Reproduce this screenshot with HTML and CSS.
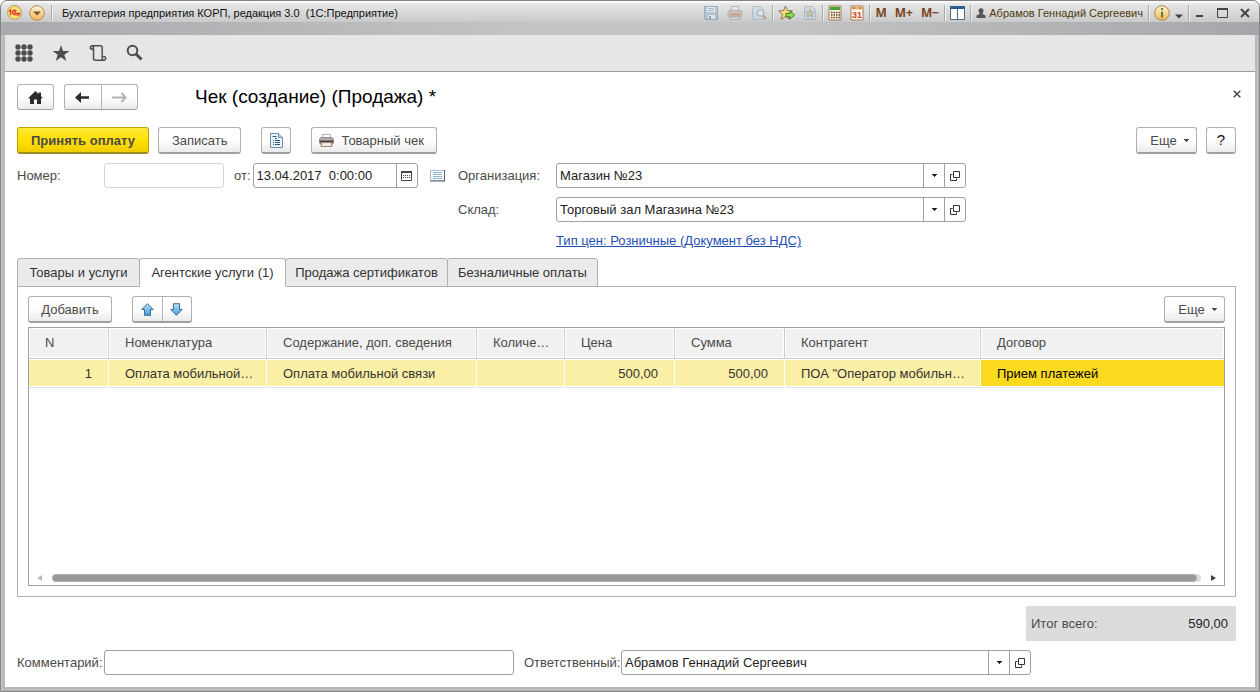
FILE: index.html
```html
<!DOCTYPE html>
<html lang="ru">
<head>
<meta charset="utf-8">
<title>Чек (создание) (Продажа)</title>
<link rel="stylesheet" href="styles.css">
</head>
<body>
<svg class="defs" aria-hidden="true">
  <symbol id="caret" viewBox="0 0 5 3"><path d="M0 0h5v1H4v1H3v1H2V2H1V1H0z" fill="currentColor"/></symbol>
  <symbol id="open" viewBox="0 0 10 10"><path d="M3.500.5h6v6h-6z M2.500 3.500h-2v6h6v-2" fill="none" stroke="currentColor"/></symbol>
</svg>
<div class="window">
  <header class="titlebar">
    <button class="tb" aria-label="1С"><svg width="15" height="15" viewBox="0 0 14 14"><defs><radialGradient id="g1"><stop offset="0" stop-color="#fff6a8"/><stop offset=".7" stop-color="#fbe36c"/><stop offset="1" stop-color="#d9b56a"/></radialGradient></defs><circle cx="7" cy="7" r="6.700" fill="url(#g1)" stroke="#b39a78" stroke-width=".6"/><path d="M1.800 6l1.700-1.300V9.500M8.800 5.300C7.800 4.200 5.200 4.600 5.200 7s2.200 2.400 7 2.300M8.500 6.600C7.700 6 6.800 6.300 6.900 7.100c0 .8 1 .7 5.300.7" fill="none" stroke="#d8231c" stroke-width="1.100"/></svg></button>
    <button class="tb menu-btn" aria-label="Меню"><svg width="16" height="16" viewBox="0 0 16 16"><defs><linearGradient id="g2" x2="0" y2="1"><stop stop-color="#fdf3df"/><stop offset=".5" stop-color="#f8d596"/><stop offset="1" stop-color="#f5b255"/></linearGradient></defs><circle cx="8" cy="8" r="7.300" fill="url(#g2)" stroke="#b58a55"/><path d="M4 6.500h8L8 10.500z" fill="#7d563a"/></svg></button>
    <span class="sep"></span>
    <span class="app-title">Бухгалтерия предприятия КОРП, редакция 3.0&nbsp; (1С:Предприятие)</span>
    <div class="tools">
      <button class="tb faded" aria-label="Сохранить"><svg width="16" height="16" viewBox="0 0 16 16"><path d="M1.500 1.500h13v13h-12l-1-1z" fill="#8fb1ce" stroke="#5681a6"/><path d="M4 2h8v5H4zM5 10h7v4H5z" fill="#eef3f7"/><path d="M5 3.500h6M5 5.500h6" stroke="#7795ad"/><path d="M6 11h2v3H6z" fill="#5681a6"/></svg></button>
      <button class="tb faded" aria-label="Печать"><svg width="16" height="16" viewBox="0 0 16 16"><path d="M4.500 1.500h7v5h-7zM3 10.500h10v4H3z" fill="#f5ece4" stroke="#8d8c93"/><rect x="1" y="5.500" width="14" height="6.500" rx="2" fill="#b4adb0" stroke="#8a858c"/><path d="M3 9.500h10" stroke="#c9632a" stroke-width="2"/><path d="M4 12.500h8" stroke="#aaa"/></svg></button>
      <button class="tb faded" aria-label="Просмотр"><svg width="16" height="16" viewBox="0 0 16 16"><path d="M1.500 1.500h8l3 3v10h-11z" fill="#c6d9e8" stroke="#86a4bc"/><circle cx="9.500" cy="8" r="3.300" fill="#e5f0f8" stroke="#67809a"/><path d="M12 10.500l3 3.500" stroke="#b36f3d" stroke-width="2.200"/></svg></button>
      <span class="sep"></span>
      <button class="tb" aria-label="В избранное"><svg width="17" height="16" viewBox="0 0 17 16"><path d="M7.500 1l2 4.500 5 .5-4 3.300 1.300 5-4.300-2.600-4.500 2.600 1.300-5L.700 6l4.800-.5z" fill="#fbd27b" stroke="#8a7a66"/><path d="M8 8.500h4V6l4.500 4.200L12 14v-2.300H8z" fill="#91df4b" stroke="#348524"/></svg></button>
      <button class="tb faded" aria-label="Избранное"><svg width="14" height="16" viewBox="0 0 14 16"><path d="M1.500 1.500h8l3 3v10h-11z" fill="#c3d3df" stroke="#839fb3"/><path d="M7 4l1.200 2.800 3 .2-2.300 2 .8 3L7 10.400 4.300 12l.8-3-2.300-2 3-.2z" fill="#c9a67c" stroke="#776f68" stroke-width=".8"/></svg></button>
      <span class="sep"></span>
      <button class="tb" aria-label="Калькулятор"><svg width="14" height="16" viewBox="0 0 14 16"><path d="M1 1h12v14H1z" fill="#fff0d8" stroke="#a17b57"/><path d="M2 2h10v3H2z" fill="#43a535"/><path d="M3 7.500h9M3 10h9M3 12.500h9" stroke="#5b4638" stroke-width="1.400" stroke-dasharray="1.500 1"/></svg></button>
      <button class="tb cal" aria-label="Календарь"><svg width="14" height="16" viewBox="0 0 14 16"><path d="M1 1h12v14H1z" fill="#fff8ec" stroke="#a17b57"/><path d="M1.500 1.500h11v3h-11z" fill="#efb375"/><path d="M3 3h2M9 3h2" stroke="#87583a"/><text x="7" y="13" text-anchor="middle" class="cal-num">31</text></svg></button>
      <span class="sep"></span>
      <button class="tb mem">M</button>
      <button class="tb mem">M+</button>
      <button class="tb mem">M−</button>
      <span class="sep"></span>
      <button class="tb" aria-label="Панели"><svg width="15" height="14" viewBox="0 0 15 14"><path d="M.5.5h14v13H.5z" fill="#fff" stroke="#486b8c"/><path d="M0 0h15v3H0z" fill="#2b5e93"/><path d="M7.500 3v10" stroke="#486b8c"/></svg></button>
      <span class="sep"></span>
      <button class="tb user"><svg width="10" height="10" viewBox="0 0 10 10"><circle cx="5" cy="2.800" r="2.500" fill="#555"/><path d="M.5 10V7.500L3.500 6V4h3v2l3 1.500V10z" fill="#555"/></svg>Абрамов Геннадий Сергеевич</button>
      <span class="sep"></span>
      <div class="info">
        <button class="tb" aria-label="Информация"><svg width="16" height="16" viewBox="0 0 16 16"><circle cx="8" cy="8" r="7.300" fill="url(#g2)" stroke="#ae8450"/><path d="M8 3v2M8 6.500v6" stroke="#4b8a24" stroke-width="2"/></svg></button>
        <button class="tb drop" aria-label="Ещё"><svg width="8" height="5" viewBox="0 0 8 5"><path d="M0 .5h8L4 4.500z" fill="#444"/></svg></button>
      </div>
      <span class="sep"></span>
      <div class="win-ctl">
        <button class="tb" aria-label="Свернуть"><svg width="11" height="10" viewBox="0 0 11 10"><path d="M2 8h7" stroke="#444" stroke-width="2"/></svg></button>
        <button class="tb" aria-label="Развернуть"><svg width="11" height="10" viewBox="0 0 11 10"><path d="M.5 1h10v8.500H.5z" fill="none" stroke="#444"/><path d="M0 1h11" stroke="#444" stroke-width="2"/></svg></button>
        <button class="tb" aria-label="Закрыть"><svg width="10" height="10" viewBox="0 0 10 10"><path d="M1 1l8 8M9 1L1 9" stroke="#444" stroke-width="2"/></svg></button>
      </div>
    </div>
  </header>
  <main class="client">
    <nav class="mainbar">
      <button class="tb" aria-label="Разделы"><svg width="18" height="18" viewBox="0 0 18 18" fill="#4d4d4d"><circle cx="3" cy="3" r="2.700"/><circle cx="9" cy="3" r="2.700"/><circle cx="15" cy="3" r="2.700"/><circle cx="3" cy="9" r="2.700"/><circle cx="9" cy="9" r="2.700"/><circle cx="15" cy="9" r="2.700"/><circle cx="3" cy="15" r="2.700"/><circle cx="9" cy="15" r="2.700"/><circle cx="15" cy="15" r="2.700"/></svg></button>
      <button class="tb" aria-label="Избранное"><svg width="18" height="18" viewBox="0 0 18 18"><path d="M9 1l2 6h6.500l-5.200 3.800 2 6.200L9 13.200 3.700 17l2-6.200L.500 7H7z" fill="#4d4d4d"/></svg></button>
      <button class="tb" aria-label="История"><svg width="18" height="18" viewBox="0 0 18 18" fill="none" stroke="#4d4d4d" stroke-width="1.500"><path d="M4.500 5.500V4.200C4.500 1.200 1.300 1.300 1.300 3.500c0 1.300 1.200 1.900 3.200 1.900M3 1.700h8.500c1.200 0 1.700.8 1.700 2v7.800M4.500 5v9.300c0 1.300.8 2 2 2h8.500M13.200 14c0 3 3.500 2.800 3.500.3 0-1.500-1.500-2-3.500-1.800z"/></svg></button>
      <button class="tb" aria-label="Поиск"><svg width="18" height="18" viewBox="0 0 18 18" fill="none" stroke="#4d4d4d"><circle cx="6.500" cy="6.500" r="4.800" stroke-width="2"/><path d="M10 10l5.500 5.500" stroke-width="3"/></svg></button>
    </nav>

    <div class="nav">
      <button class="btn home" aria-label="Домой"><svg width="15" height="13" viewBox="0 0 15 13"><path d="M7.500 0l3 2.900V1.500H13v3.800L15 7.300h-2V13H9V8.500H6V13H2V7.300H0z" fill="#2b2b2b"/></svg></button>
      <div class="pair nav-pair">
        <button aria-label="Назад"><svg width="15" height="11" viewBox="0 0 15 11"><path d="M6 0v4.300h8v2.400H6V11L0 5.500z" fill="#2b2b2b"/></svg></button>
        <button aria-label="Вперёд"><svg width="15" height="11" viewBox="0 0 15 11"><path d="M9.500 1l4 4.500-4 4.500M13 5.500H0" fill="none" stroke="#b4b4b4" stroke-width="2"/></svg></button>
      </div>
      <h1>Чек (создание) (Продажа) *</h1>
      <button class="tb close" aria-label="Закрыть форму"><svg width="8" height="8" viewBox="0 0 8 8"><path d="M.7.700l6.600 6.600M7.300.700L.700 7.300" stroke="#444" stroke-width="1.400"/></svg></button>
    </div>

    <form class="form">
      <div class="commands">
        <button type="button" class="btn primary">Принять оплату</button>
        <button type="button" class="btn">Записать</button>
        <button type="button" class="btn square" aria-label="Проводки"><svg width="13" height="15" viewBox="0 0 13 15"><path d="M.5.5h8l4 4v10H.5z" fill="#e9f3fa" stroke="#6e8fa9"/><path d="M8.500.5v4h4" fill="#bcd3e4" stroke="#6e8fa9"/><path d="M2.500 3.500h4M5 5.500h2M3 7.500h1M5 7.500h5M3 9.500h1M5 9.500h5M3 11.500h1M5 11.500h5" stroke="#315a79"/></svg></button>
        <button type="button" class="btn print"><svg width="15" height="13" viewBox="0 0 15 13"><path d="M3.500.5h8l.5 4H3z" fill="#fff" stroke="#b5afaf"/><rect x=".5" y="3.500" width="14" height="7" rx="2.500" fill="#b5b1b2" stroke="#8b8787"/><path d="M1 7.500h13" stroke="#4a403e" stroke-width="2"/><path d="M3 8.500h9l1 4H2z" fill="#f6e6dc" stroke="#a08678"/><path d="M11 6h2" stroke="#d8652f"/></svg>Товарный чек</button>
        <button type="button" class="btn more push">Еще <svg width="5" height="3"><use href="#caret"/></svg></button>
        <button type="button" class="btn square help">?</button>
      </div>

      <div class="fields">
        <div class="doc">
          <label class="num-label" for="num">Номер:</label>
          <div class="field num pale"><input id="num" type="text"></div>
          <label for="date">от:</label>
          <div class="field date"><input id="date" type="text" value="13.04.2017  0:00:00"><button type="button" aria-label="Выбрать дату"><svg width="11" height="10" viewBox="0 0 11 10"><path d="M.5 1h10v8.500H.5z" fill="none" stroke="#444"/><path d="M0 1h11" stroke="#444" stroke-width="2"/><path d="M2 4.500h8M2 6.500h8" stroke="#444" stroke-dasharray="1 1"/></svg></button></div>
          <svg class="list-icon" width="15" height="12" viewBox="0 0 15 12"><path d="M.5.5h14v10H.5z" fill="#fff" stroke="#a5bdd0"/><path d="M14.500 0v11M0 11h15" stroke="#4d6470"/><path d="M3 2.500h9M3 4.500h9M3 6.500h9M3 8.500h9" stroke="#8db0cc"/></svg>
        </div>
        <div class="org">
          <label for="org">Организация:</label>
          <div class="field"><div class="combo"><select id="org"><option>Магазин №23</option></select><span class="arrow"><svg width="5" height="3"><use href="#caret"/></svg></span></div><button type="button" aria-label="Открыть организацию"><svg width="10" height="10"><use href="#open"/></svg></button></div>
          <label for="store">Склад:</label>
          <div class="field"><div class="combo"><select id="store"><option>Торговый зал Магазина №23</option></select><span class="arrow"><svg width="5" height="3"><use href="#caret"/></svg></span></div><button type="button" aria-label="Открыть склад"><svg width="10" height="10"><use href="#open"/></svg></button></div>
          <a class="price" href="#price">Тип цен: Розничные (Документ без НДС)</a>
        </div>
      </div>

      <div class="tabs" role="tablist">
        <button type="button" role="tab">Товары и услуги</button>
        <button type="button" role="tab" aria-selected="true" class="active">Агентские услуги (1)</button>
        <button type="button" role="tab">Продажа сертификатов</button>
        <button type="button" role="tab">Безналичные оплаты</button>
      </div>
      <section class="panel">
        <div class="panel-bar">
          <button type="button" class="btn add">Добавить</button>
          <div class="pair move-pair">
            <button type="button" aria-label="Вверх"><svg width="13" height="13" viewBox="0 0 13 13"><defs><linearGradient id="g3" x2="0" y2="1"><stop stop-color="#b9e0f7"/><stop offset="1" stop-color="#3f9ede"/></linearGradient></defs><path d="M6.500.7l5.700 5.800H9.500v5.800h-6V6.500H.800z" fill="url(#g3)" stroke="#3a6c93"/></svg></button>
            <button type="button" aria-label="Вниз"><svg width="13" height="13" viewBox="0 0 13 13"><path d="M6.500 12.300L.8 6.500h2.700V.7h6v5.800h2.700z" fill="url(#g3)" stroke="#3a6c93"/></svg></button>
          </div>
          <button type="button" class="btn more push">Еще <svg width="5" height="3"><use href="#caret"/></svg></button>
        </div>
        <div class="grid">
          <table>
            <colgroup><col class="c-n"><col class="c-nom"><col class="c-desc"><col class="c-qty"><col class="c-sum"><col class="c-sum"><col class="c-agent"><col></colgroup>
            <thead><tr><th>N</th><th>Номенклатура</th><th>Содержание, доп. сведения</th><th>Количе…</th><th>Цена</th><th>Сумма</th><th>Контрагент</th><th>Договор</th></tr></thead>
            <tbody><tr><td class="r">1</td><td>Оплата мобильной…</td><td>Оплата мобильной связи</td><td></td><td class="r">500,00</td><td class="r">500,00</td><td>ПОА "Оператор мобильн…</td><td class="current">Прием платежей</td></tr></tbody>
          </table>
          <div class="scroll">
            <svg width="5" height="6" viewBox="0 0 5 6"><path d="M5 0v6L0 3z" fill="#bbb"/></svg>
            <div class="track"><div class="thumb"></div></div>
            <svg width="5" height="6" viewBox="0 0 5 6"><path d="M0 0v6l5-3z" fill="#444"/></svg>
          </div>
        </div>
      </section>

      <div class="total"><span>Итог всего:</span><output>590,00</output></div>

      <div class="footer">
        <label for="comment">Комментарий:</label>
        <div class="field comment"><input id="comment" type="text"></div>
        <label class="resp-label" for="resp">Ответственный:</label>
        <div class="field"><div class="combo"><select id="resp"><option>Абрамов Геннадий Сергеевич</option></select><span class="arrow"><svg width="5" height="3"><use href="#caret"/></svg></span></div><button type="button" aria-label="Открыть ответственного"><svg width="10" height="10"><use href="#open"/></svg></button></div>
      </div>
    </form>
  </main>
</div>
</body>
</html>
```
FILE: styles.css
```css
* { box-sizing: border-box; }
body { margin: 0; background: #fff; color: #4a4a4a; font: 13px/16px "Liberation Sans", Arial, sans-serif; }
button, input, select { font: inherit; color: inherit; margin: 0; }
button { padding: 0; border: 0; background: none; white-space: nowrap; }
svg { display: block; flex: none; }
.defs { position: absolute; width: 0; height: 0; }

.window { min-height: 100vh; display: flex; flex-direction: column; padding: 0 4px 4px; border: 1px solid #858283; border-radius: 7px 7px 0 0; background: #b8b9ba; box-shadow: inset 1px 0 #c9c9c9; }
.titlebar { height: 34px; margin: 0 -4px; padding: 0 9px 11px 6px; display: flex; align-items: center; border-radius: 6px 6px 0 0; background: linear-gradient(#fff 0, #e6e6e6 3px, #c9cacb 21px, transparent 21px), linear-gradient(90deg, #a9aaad, #c4c5c6 45%, #c4c5c6 60%, #a6a7aa); }
.tb { display: flex; align-items: center; justify-content: center; }
.titlebar .sep { width: 1px; height: 16px; background: #aaa; box-shadow: 1px 0 #eee; }
.menu-btn { margin: 0 6px 0 7px; }
.app-title { margin-left: 10px; padding-top: 1px; color: #111; font-size: 11px; }
.tools { margin-left: auto; display: flex; align-items: center; gap: 8px; padding-top: 1px; color: #4d3b0c; font-size: 11px; }
.tools .sep { margin: 0 -3px; }
.faded { opacity: .5; }
.cal-num { font: bold 9px "Liberation Sans", Arial, sans-serif; fill: #d9412b; }
.mem { color: #7b4322; font: bold 12px/16px "Noto Sans", sans-serif; }
.user { gap: 3px; }
.info { display: flex; gap: 5px; }
.drop { padding-top: 6px; }
.win-ctl { display: flex; gap: 12px; }

.client { flex: 1; display: flex; flex-direction: column; background: #fff; }
.mainbar { height: 37px; display: flex; align-items: center; gap: 19px; padding-left: 10px; background: #e6e6e6; border-bottom: 1px solid #9d9d9d; }

.btn, .pair { border: 1px solid #b0b0b0; border-bottom: 2px solid #a0a0a0; border-radius: 3px; background: linear-gradient(#fff 50%, #ebebeb); }
.btn { height: 27px; padding: 1px 13px 0; display: flex; align-items: center; justify-content: center; }
.nav { display: flex; align-items: center; padding: 12px 14px 0 12px; }
.nav .btn, .nav .pair { border-width: 1px; }
.home { width: 37px; height: 26px; padding: 0; }
.pair { display: flex; }
.pair button { flex: 1; display: flex; align-items: center; justify-content: center; }
.pair button + button { border-left: 1px solid #b5b5b5; }
.nav-pair { width: 74px; height: 26px; margin-left: 10px; }
.nav h1 { margin: 0 0 0 57px; color: #000; font: 19px/24px "Liberation Sans", Arial, sans-serif; }
.close { margin-left: auto; padding-bottom: 6px; }

.form { flex: 1; display: flex; flex-direction: column; padding: 17px 19px 12px 12px; }
.commands { display: flex; }
.primary { margin-right: 9px; border-color: #c0a300; border-bottom-color: #a08c20; background: linear-gradient(#ffea3c, #ffe000 50%, #f1ce00); font-weight: bold; }
.square { width: 30px; padding: 0; margin-left: 20px; }
.print { margin-left: 20px; padding: 1px 12px 0 7px; gap: 7px; }
.push { margin-left: auto; }
.more { width: 61px; gap: 7px; padding: 1px 0 0 6px; }
.help { margin-left: 9px; color: #111; font-size: 15px; }

.fields { display: flex; align-items: flex-start; padding-top: 9px; }
.doc { display: flex; align-items: center; width: 441px; }
.num-label { width: 87px; }
.num { width: 120px; margin-right: 10px; }
.date { width: 165px; margin-left: 2px; }
.list-icon { margin-left: 12px; }
.field { height: 25px; display: flex; border: 1px solid #a0a0a0; border-radius: 3px; background: #fff; color: #222; }
.field.pale { border-color: #d6d6d6; }
.field input { flex: 1; width: 0; padding: 0 3px; border: 0; background: none; outline: 0; white-space: pre; }
.field > button { width: 21px; display: flex; align-items: center; justify-content: center; border-left: 1px solid #a0a0a0; color: #333; }
.combo { flex: 1; display: grid; }
.combo select, .arrow { grid-area: 1 / 1; }
.combo select { appearance: none; padding: 0 24px 0 3px; border: 0; background: none; }
.arrow { justify-self: end; width: 21px; display: flex; align-items: center; justify-content: center; border-left: 1px solid #a0a0a0; pointer-events: none; }
.org { display: grid; grid-template-columns: 98px 410px; row-gap: 9px; align-items: center; }
.price { grid-column: 2; justify-self: start; padding-top: 2px; color: #1f4fb5; }

.tabs { display: grid; grid-template-columns: 123px 146px 162px 150px; padding-top: 9px; }
.tabs button { height: 29px; border: 1px solid #b0b0b0; border-radius: 3px 3px 0 0; background: #ebebeb; color: #333; }
.tabs button + button { margin-left: -1px; }
.tabs .active { position: relative; background: #fff; border-bottom-color: #fff; }
.panel { flex: 1; display: flex; flex-direction: column; margin-top: -1px; padding: 9px 10px 10px; border: 1px solid #b0b0b0; }
.panel-bar { display: flex; }
.add { width: 84px; }
.move-pair { width: 60px; height: 27px; margin-left: 20px; }
.grid { flex: 1; display: flex; flex-direction: column; margin-top: 4px; border: 1px solid #a0a0a0; }
table { width: 100%; table-layout: fixed; border-collapse: separate; border-spacing: 0; }
.c-n { width: 80px; }
.c-nom { width: 158px; }
.c-desc { width: 210px; }
.c-qty { width: 88px; }
.c-sum { width: 110px; }
.c-agent { width: 196px; }
th, td { padding: 0 8px 0 16px; overflow: hidden; white-space: nowrap; text-overflow: ellipsis; text-align: left; font-weight: normal; }
th { height: 31px; background: #f1f1f1; border-right: 1px solid #ccc; border-bottom: 1px solid #ccc; box-shadow: inset 0 0 0 1px #fff; }
td { height: 29px; background: #fcf0a6; color: #333; border-top: 1px solid #fff; border-bottom: 1px solid #e3e3e3; border-right: 1px solid #fff; box-shadow: inset 0 -1px #fff; }
th:last-child, td:last-child { border-right: 0; }
td.r { text-align: right; padding-right: 16px; }
td.current { background: #fbda20; color: #000; }
.scroll { margin-top: auto; display: flex; align-items: center; gap: 10px; padding: 0 8px 3px; }
.track { flex: 1; height: 8px; border-radius: 4px; background: #dcdcdc; padding: 0 4px 0 0; }
.thumb { height: 8px; border: 1px solid #b0b0b0; border-radius: 4px; background: #999; }

.total { align-self: flex-end; width: 210px; height: 35px; margin-top: 9px; padding: 0 8px 0 5px; display: flex; justify-content: space-between; align-items: center; background: #dcdcdc; }
.total output { color: #222; }
.footer { display: flex; align-items: center; margin-top: 9px; }
.footer .field { width: 410px; }
.footer > label { width: 87px; }
.footer > .resp-label { width: 97px; margin-left: 10px; }
```
